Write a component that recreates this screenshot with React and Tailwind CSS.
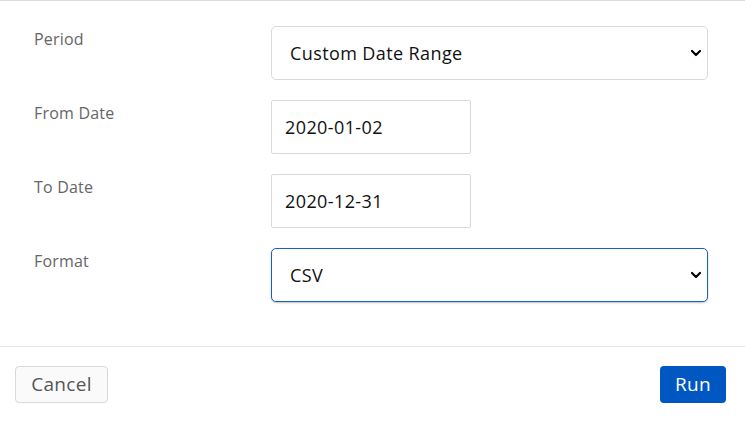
import { useState } from "react";

const fieldFont = { fontFamily: "'Open Sans', Lato, sans-serif" };

function Chevron() {
  return (
    <svg
      width="12"
      height="8"
      viewBox="0 0 12 8"
      fill="none"
      stroke="currentColor"
      strokeWidth="2.2"
      strokeLinecap="round"
      strokeLinejoin="round"
      className="pointer-events-none absolute right-[6px] top-1/2 -translate-y-1/2 text-black"
    >
      <path d="M2 2l4 4 4-4" />
    </svg>
  );
}

function Row({ label, children }) {
  return (
    <div className="grid grid-cols-[237px_1fr] items-start">
      <label className="text-[16px] leading-6 tracking-[0.2px] text-[#666] pt-[1px]">{label}</label>
      <div>{children}</div>
    </div>
  );
}

export default function App() {
  const [period, setPeriod] = useState("custom");
  const [from, setFrom] = useState("2020-01-02");
  const [to, setTo] = useState("2020-12-31");
  const [format, setFormat] = useState("csv");

  return (
    <div className="w-[745px] h-[422px] bg-white border-t border-[#dcdcdc] flex flex-col" style={fieldFont}>
      {/* Form body */}
      <div className="pl-[34px] pr-[37px] pt-[25px] pb-[44px] flex flex-col gap-5 border-b border-[#e5e5e5]">
        <Row label="Period">
          <div className="relative">
            <select
              value={period}
              onChange={(e) => setPeriod(e.target.value)}
              className="appearance-none w-full h-[54px] pl-[18px] pr-8 text-[18px] tracking-[0.4px] text-[#111] bg-white border border-[#d9d9d9] rounded-[5px] outline-none"
            >
              <option value="custom">Custom Date Range</option>
              <option value="month">This Month</option>
              <option value="year">This Year</option>
            </select>
            <Chevron />
          </div>
        </Row>

        <Row label="From Date">
          <input
            value={from}
            onChange={(e) => setFrom(e.target.value)}
            className="w-[200px] h-[54px] px-[13px] text-[18px] tracking-[0.4px] text-[#111] bg-white border border-[#d9d9d9] rounded-[2px] outline-none"
          />
        </Row>

        <Row label="To Date">
          <input
            value={to}
            onChange={(e) => setTo(e.target.value)}
            className="w-[200px] h-[54px] px-[13px] text-[18px] tracking-[0.4px] text-[#111] bg-white border border-[#d9d9d9] rounded-[2px] outline-none"
          />
        </Row>

        <Row label="Format">
          <div className="relative">
            <select
              value={format}
              onChange={(e) => setFormat(e.target.value)}
              className="appearance-none w-full h-[54px] pl-[18px] pr-8 text-[18px] tracking-[0.4px] text-[#111] bg-white border border-[#1b5fbf] rounded-[5px] shadow-[0_1px_2px_rgba(0,0,0,0.25)] outline-none"
            >
              <option value="csv">CSV</option>
              <option value="xlsx">XLSX</option>
              <option value="pdf">PDF</option>
            </select>
            <Chevron />
          </div>
        </Row>
      </div>

      {/* Footer */}
      <div className="flex justify-between items-center pl-[15px] pr-[19px] pt-[19px]">
        <button className="h-[37px] w-[93px] text-[19px] tracking-[0.3px] text-[#555] bg-[#fafafa] border border-[#d9d9d9] rounded-[4px]">
          Cancel
        </button>
        <button className="h-[37px] w-[66px] text-[19px] tracking-[0.3px] text-white bg-[#0057c2] rounded-[4px]">
          Run
        </button>
      </div>
    </div>
  );
}
